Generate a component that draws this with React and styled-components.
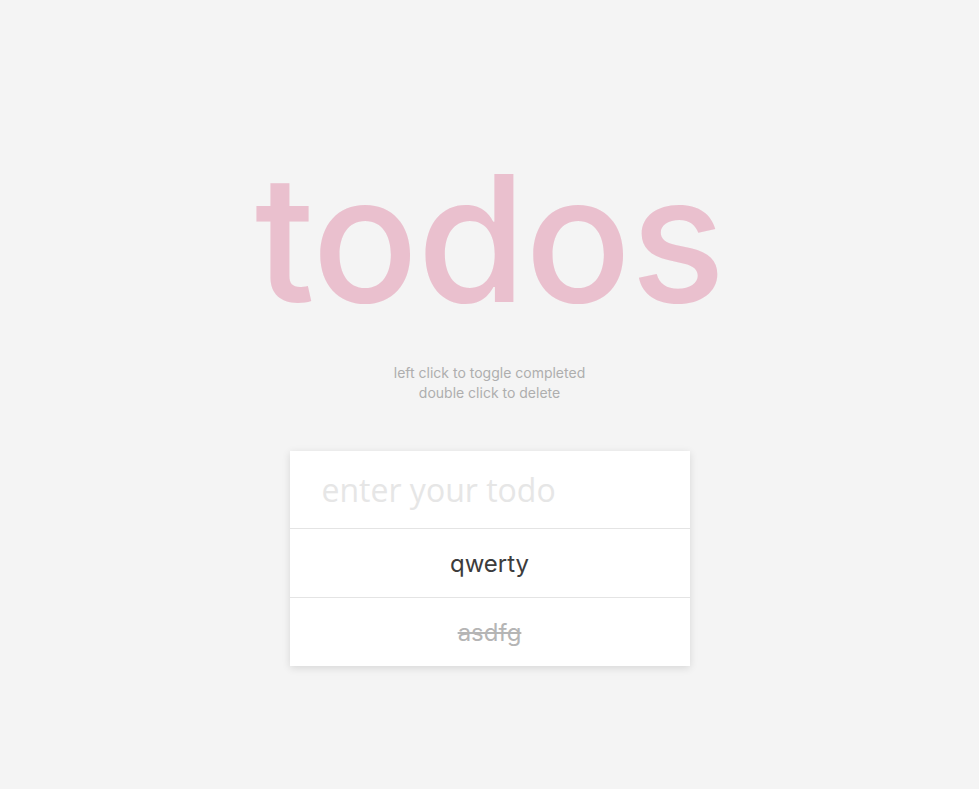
import styled, { createGlobalStyle } from 'styled-components';

const GlobalStyle = createGlobalStyle`
  html, body {
    margin: 0;
    padding: 0;
    background: #f4f4f4;
  }
  body {
    font-family: Inter, "Noto Sans", sans-serif;
  }
`

const Page = styled.div`
  min-height: 789px;
  display: flex;
  flex-direction: column;
  align-items: center;
  padding-top: 118px;
  box-sizing: border-box;
`

const Title = styled.h1`
  margin: 0;
  font-family: Inter, sans-serif;
  font-weight: 500;
  font-size: 176px;
  line-height: 240px;
  letter-spacing: -1px;
  color: #eac0ce;
`

const Hint = styled.p`
  margin: 5px 0 0;
  font-family: Inter, sans-serif;
  font-size: 14px;
  line-height: 20px;
  color: #aeaeae;
  text-align: center;
`

const Card = styled.div`
  margin-top: 48px;
  width: 400px;
  background: #fff;
  box-shadow: 0 2px 8px rgba(0, 0, 0, 0.12);
`

const TodoInput = styled.input`
  display: block;
  width: 100%;
  box-sizing: border-box;
  height: 78px;
  padding: 0 32px;
  border: none;
  border-bottom: 1px solid #e4e4e4;
  outline: none;
  font-family: "Open Sans", sans-serif;
  font-size: 32px;
  color: #444;
  background: transparent;

  &::placeholder {
    color: #e6e6e6;
  }
`

const Row = styled.div`
  height: 68px;
  display: flex;
  align-items: center;
  justify-content: center;
  font-family: Inter, sans-serif;
  font-size: 24px;
  color: ${(p) => (p.$done ? '#b5b5b5' : '#3c3c3c')};
  text-decoration: ${(p) => (p.$done ? 'line-through' : 'none')};
  cursor: pointer;
  user-select: none;

  & + & {
    border-top: 1px solid #e4e4e4;
  }
`

const todos = [
  { id: 1, text: 'qwerty', done: false },
  { id: 2, text: 'asdfg', done: true },
]

export default function App() {
  return (
    <>
      <GlobalStyle />
      <Page>
        <Title>todos</Title>
        <Hint>
          left click to toggle completed
          <br />
          double click to delete
        </Hint>
        <Card>
          <TodoInput placeholder="enter your todo" />
          {todos.map((t) => (
            <Row key={t.id} $done={t.done}>{t.text}</Row>
          ))}
        </Card>
      </Page>
    </>
  )
}
